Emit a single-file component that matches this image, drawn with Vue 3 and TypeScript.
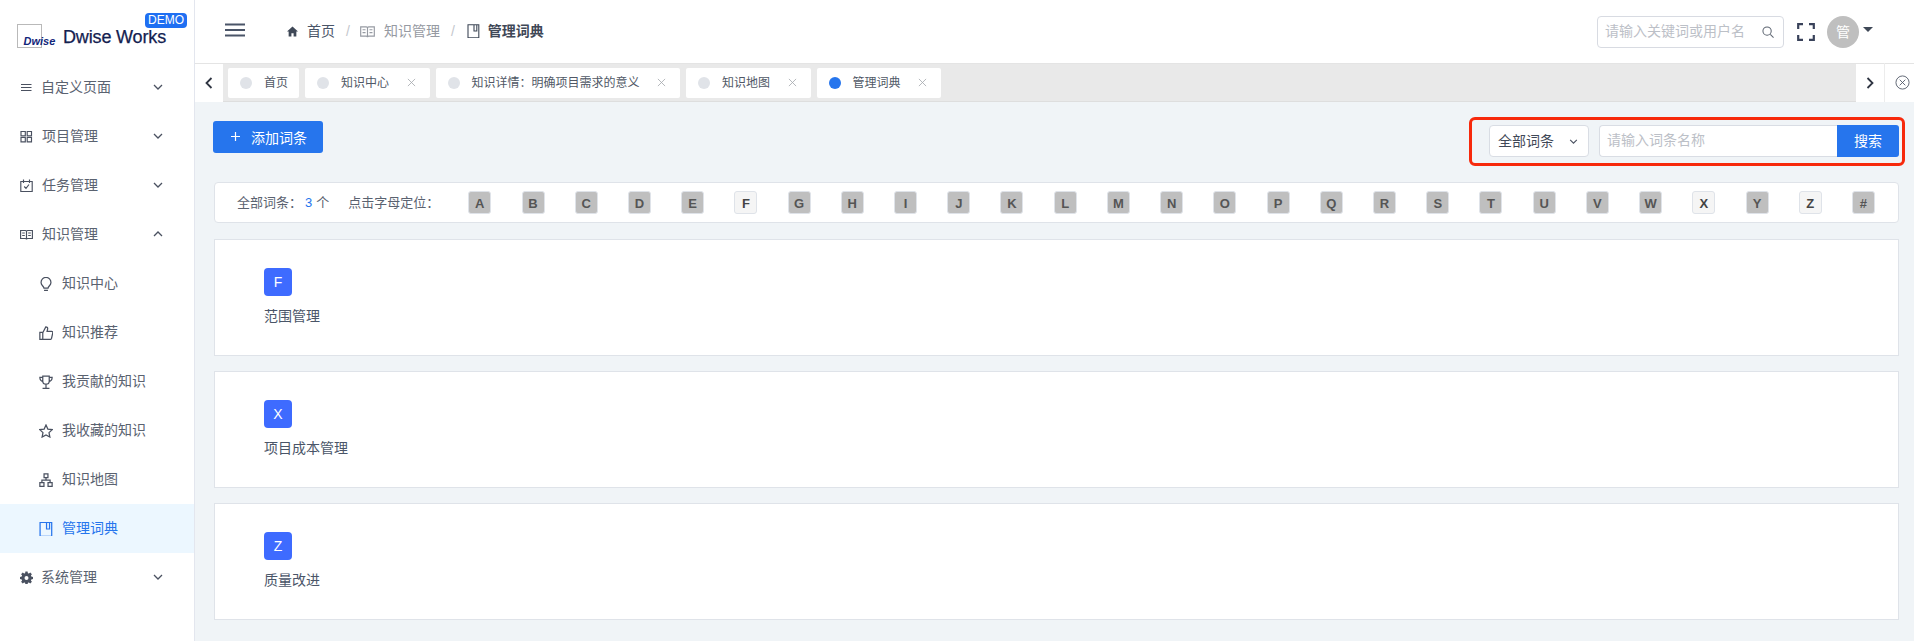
<script setup lang="ts">
interface Item { label: string; icon: string; chev?: 'down' | 'up'; sub?: boolean; active?: boolean; solid?: boolean; tight?: boolean }
const icons: Record<string, string> = {
  list: 'M1 3.500h10.500M1 6.500h10.500M1 9.500h10.500',
  grid: 'M1 1.500h4.300v4.300H1zM7.200 1.500h4.300v4.300H7.200zM1 7.500h4.300v4.300H1zM7.200 7.500h4.300v4.300H7.200z',
  task: 'M.8 2.500h11.400v10H.8zM3.500 .5v3.500M9.500 .5v3.500M4.200 7.500l1.800 1.800 3-3.800',
  book: 'M.6 2.500h4.900c.6 0 1 .4 1 1v8c0-.6-.4-1-1-1H.6zM12.400 2.500H7.500c-.6 0-1 .4-1 1v8c0-.6.4-1 1-1h4.900zM2.200 5h2.600M2.200 7.500h2.600M8.200 5h2.600M8.200 7.500h2.600',
  bulb: 'M4.600 10.300C4.400 8.600 1.900 7.700 1.900 5a4.600 4.600 0 0 1 9.200 0c0 2.700-2.500 3.600-2.700 5.300zM4.700 12.500h3.600',
  thumb: 'M.8 6h2.700v6.500H.8zM3.500 6.200 6.300.8c1.300 0 2 .9 1.700 2L7.500 5h4.200c.8 0 1.300.7 1.100 1.400l-1.200 5.200c-.2.600-.6.900-1.200.9H3.500',
  trophy: 'M3.500 1h6v4.500a3 3 0 0 1-6 0zM3.500 2.200H.8c0 2.400.9 3.600 2.900 4M9.500 2.200h2.700c0 2.400-.9 3.600-2.900 4M6.500 8.500v3.400M3.300 12.400h6.400',
  star: 'm6.500 .9 1.700 3.800 4.100.5-3 2.800.8 4.100-3.600-2-3.600 2 .8-4.100-3-2.800 4.100-.5z',
  map: 'M4.700 .9h3.600v3.400H4.700zM.8 8.900h3.800v3.500H.8zM8.400 8.900h3.800v3.500H8.400zM6.500 4.300v2.400M2.700 8.900V6.700h7.600v2.200',
  doc: 'M1 .3h10.800v13H1zM7 .3v6.200h2.800V.3',
  gear: 'M5.400.5h2.200l.3 1.700 1 .4 1.400-1 1.600 1.600-1 1.400.4 1 1.700.3v2.200l-1.700.3-.4 1 1 1.400-1.600 1.600-1.400-1-1 .4-.3 1.700H5.400l-.3-1.700-1-.4-1.400 1L1.100 10.800l1-1.400-.4-1L0 8.100V5.900l1.700-.3.4-1-1-1.400L2.700 1.600l1.400 1 1-.4zM6.500 5a2 2 0 1 0 0 4 2 2 0 0 0 0-4z',
}
const menu: Item[] = [
  { label: '自定义页面', icon: 'list', chev: 'down', tight: true },
  { label: '项目管理', icon: 'grid', chev: 'down' },
  { label: '任务管理', icon: 'task', chev: 'down' },
  { label: '知识管理', icon: 'book', chev: 'up' },
  { label: '知识中心', icon: 'bulb', sub: true },
  { label: '知识推荐', icon: 'thumb', sub: true },
  { label: '我贡献的知识', icon: 'trophy', sub: true },
  { label: '我收藏的知识', icon: 'star', sub: true },
  { label: '知识地图', icon: 'map', sub: true },
  { label: '管理词典', icon: 'doc', sub: true, active: true },
  { label: '系统管理', icon: 'gear', chev: 'down', solid: true, tight: true },
]
const tabs = [
  { label: '首页', closable: false, on: false },
  { label: '知识中心', closable: true, on: false },
  { label: '知识详情：明确项目需求的意义', closable: true, on: false },
  { label: '知识地图', closable: true, on: false },
  { label: '管理词典', closable: true, on: true },
]
const letters = 'ABCDEFGHIJKLMNOPQRSTUVWXYZ#'.split('')
const hasWords = ['F', 'X', 'Z']
const words = [
  { key: 'F', name: '范围管理' },
  { key: 'X', name: '项目成本管理' },
  { key: 'Z', name: '质量改进' },
]
</script>

<template>
  <div class="app">
    <aside class="side">
      <div class="logo">
        <div class="logo-box"><span class="logo-mark">Dwise</span></div>
        <span class="logo-name">Dwise Works</span>
        <span class="demo">DEMO</span>
      </div>
      <nav>
        <div v-for="m in menu" :key="m.label" class="mi" :class="{ sub: m.sub, active: m.active, tight: m.tight }">
          <svg class="mi-ic" viewBox="0 0 13 13" :class="{ solid: m.solid }"><path :d="icons[m.icon]" /></svg>
          <span class="mi-t">{{ m.label }}</span>
          <svg v-if="m.chev" class="chev" viewBox="0 0 10 6"><path :d="m.chev === 'down' ? 'M1 1l4 4 4-4' : 'M1 5l4-4 4 4'" /></svg>
        </div>
      </nav>
    </aside>

    <div class="main">
      <header class="top">
        <svg class="burger" viewBox="0 0 20 14"><path d="M0 1.500h20M0 7h20M0 12.500h20" /></svg>
        <div class="crumbs">
          <svg class="home" viewBox="0 0 10 10"><path d="M5 .5 0 5h1.500v4.500h2.500V6.500h2v3h2.500V5H10z" /></svg>
          <span class="c-home">首页</span>
          <span class="sep">/</span>
          <svg class="c-ic grey" viewBox="0 0 13 13"><path :d="icons.book" /></svg>
          <span class="c-mid">知识管理</span>
          <span class="sep">/</span>
          <svg class="c-ic doc" viewBox="0 0 13 13"><path :d="icons.doc" /></svg>
          <span class="c-cur">管理词典</span>
        </div>
        <div class="top-right">
          <div class="t-search">
            <span class="ph">请输入关键词或用户名</span>
            <svg class="mag" viewBox="0 0 13 13"><circle cx="5.500" cy="5.500" r="4.500" /><path d="m9 9 3.500 3.500" /></svg>
          </div>
          <svg class="full" viewBox="0 0 18 18"><path d="M1.200 6V1.200H6M12 1.200h4.800V6M16.800 12v4.800H12M6 16.800H1.200V12" /></svg>
          <div class="avatar">管</div>
          <span class="caret"></span>
        </div>
      </header>

      <div class="tabbar">
        <div class="arrow"><svg viewBox="0 0 8 12"><path d="M6.500 1 1.500 6l5 5" /></svg></div>
        <div class="tabs">
          <div v-for="t in tabs" :key="t.label" class="tab" :class="{ fixed: !t.closable }">
            <span class="dot" :class="{ on: t.on }"></span>
            <span class="tab-t">{{ t.label }}</span>
            <svg v-if="t.closable" class="x" viewBox="0 0 10 10"><path d="m1 1 8 8M9 1 1 9" /></svg>
          </div>
        </div>
        <div class="arrow r"><svg viewBox="0 0 8 12"><path d="m1.500 1 5 5-5 5" /></svg></div>
        <div class="closeall"><svg viewBox="0 0 16 16"><circle cx="8" cy="8" r="7" /><path d="m5 5 6 6M11 5l-6 6" /></svg></div>
      </div>

      <main class="content">
        <div class="toolbar">
          <button class="add"><svg viewBox="0 0 9 9"><path d="M4.500 0v9M0 4.500h9" /></svg>添加词条</button>
          <div class="filter">
            <div class="select"><span>全部词条</span><svg viewBox="0 0 10 6"><path d="M1 1l4 4 4-4" /></svg></div>
            <div class="input"><span class="ph">请输入词条名称</span></div>
            <button class="go">搜索</button>
          </div>
        </div>

        <div class="bar">
          <span class="b-l">全部词条：<em>3</em>个</span>
          <span class="b-p">点击字母定位：</span>
          <div class="letters">
            <span v-for="l in letters" :key="l" class="key" :class="{ live: hasWords.includes(l) }">{{ l }}</span>
          </div>
        </div>

        <section v-for="w in words" :key="w.key" class="card">
          <div class="badge">{{ w.key }}</div>
          <div class="word">{{ w.name }}</div>
        </section>
      </main>
    </div>
  </div>
</template>

<style>
html, body { margin: 0; background: #fff; overflow: hidden; }
</style>

<style scoped>
.app {
  display: flex;
  height: 641px;
  overflow: hidden;
  font-family: "Liberation Sans", "Noto Sans CJK SC", sans-serif;
  font-size: 14px;
  color: #4a5568;
}
svg { fill: none; stroke: currentColor; display: block; flex: none; }

.side { width: 194px; flex: none; border-right: 1px solid #e3e6ee; background: #fff; }
.logo { position: relative; height: 63px; }
.logo-box { position: absolute; left: 17px; top: 24px; width: 23px; height: 22px; border: 1.5px solid #b9b9b9; }
.logo-mark { position: absolute; left: 5.500px; top: 9.500px; font-size: 11px; line-height: 13px; font-weight: 700; font-style: italic; color: #12267a; }
.logo-name { position: absolute; left: 63px; top: 26px; font-size: 18px; line-height: 22px; letter-spacing: -.15px; color: #132150; white-space: nowrap; -webkit-text-stroke: .25px #132150; }
.demo { position: absolute; left: 145px; top: 13px; width: 42px; height: 15px; line-height: 15px; text-align: center; font-size: 12px; color: #fff; background: #1f6ff2; border-radius: 4px; }

.mi { height: 49px; box-sizing: border-box; padding-bottom: 2px; display: flex; align-items: center; padding-left: 20px; position: relative; color: #5a6270; }
.mi.sub { padding-left: 39px; }
.mi.active { background: #ecf7ff; color: #2675ed; }
.mi-ic { width: 13px; height: 13px; stroke-width: 1.150; color: #4a5160; margin-top: 2px; }
.mi.sub .mi-ic { width: 14px; height: 14px; }
.mi.active .mi-ic { color: #2675ed; }
.mi-ic.solid { fill: #4a5160; fill-rule: evenodd; stroke: none; }
.mi-t { margin-left: 9px; line-height: 20px; }
.mi.tight .mi-t { margin-left: 8px; }
.mi.sub .mi-t { margin-left: 9px; }
.chev { position: absolute; left: 153px; top: 21px; width: 10px; height: 6px; stroke-width: 1.300; color: #4a5160; }

.main { flex: 1; min-width: 0; display: flex; flex-direction: column; }
.top { height: 63px; flex: none; display: flex; align-items: center; }
.burger { width: 20px; height: 14px; margin-left: 30px; margin-top: -4px; stroke-width: 2; color: #4a5568; }
.crumbs { display: flex; align-items: center; margin-left: 42px; line-height: 20px; margin-top: -1px; }
.home { width: 11px; height: 11px; fill: #3f4857; stroke: none; }
.c-home { margin-left: 9px; color: #4a5568; }
.sep { margin: 0 10px 0 11px; color: #c4c7cd; font-size: 14px; }
.c-ic { width: 15px; height: 15px; stroke-width: 1; }
.c-ic.grey { color: #969aa2; }
.c-ic.doc { color: #3f4857; width: 13px; height: 14px; margin-left: 2px; stroke-width: 1.100; }
.c-mid { margin-left: 9px; color: #969aa2; }
.c-cur { margin-left: 8px; font-weight: 700; color: #3f4857; }
.top-right { margin-left: auto; display: flex; align-items: center; margin-right: 41px; }
.t-search { width: 187px; height: 32px; box-sizing: border-box; border: 1px solid #d8dbe2; border-radius: 4px; display: flex; align-items: center; padding: 0 0 1px 7px; margin-right: 13px; position: relative; }
.ph { color: #bcc0c7; line-height: 20px; white-space: nowrap; }
.mag { position: absolute; right: 9px; top: 9px; width: 12px; height: 12px; stroke-width: 1.100; color: #5c6470; }
.full { width: 18px; height: 18px; stroke-width: 2.200; color: #39425a; margin-right: 12px; }
.avatar { width: 32px; height: 32px; border-radius: 50%; background: #bfbfbf; color: #fff; text-align: center; line-height: 32px; }
.caret { width: 0; height: 0; border: 5px solid transparent; border-top: 5px solid #3f4857; border-bottom: 0; margin-left: 4px; margin-top: -4px; }

.tabbar { height: 39px; flex: none; display: flex; box-sizing: border-box; border-top: 1px solid #e4e4e4; }
.arrow { width: 28px; flex: none; display: flex; align-items: center; justify-content: center; background: #fff; color: #2f3542; }
.arrow svg { width: 8px; height: 12px; stroke-width: 1.800; }
.tabs { flex: 1; min-width: 0; display: flex; align-items: center; gap: 6px; padding-left: 5px; background: #e9e9e9; border-bottom: 1px solid #dedede; }
.tab { height: 30px; background: #fff; border-radius: 2px; display: flex; align-items: center; padding: 0 14px 0 12px; font-size: 12px; color: #505866; box-sizing: border-box; }
.tab.fixed { padding-right: 11px; }
.dot { width: 12px; height: 12px; border-radius: 50%; background: #e0e3e8; margin-right: 12px; }
.dot.on { background: #2675ed; }
.tab-t { line-height: 16px; white-space: nowrap; padding-top: 1px; }
.x { width: 9px; height: 9px; margin-left: 17.500px; color: #a5a8ad; stroke-width: .9; }
.closeall { width: 30px; flex: none; border-left: 1px solid #ececec; display: flex; align-items: center; padding-left: 10px; color: #4a5160; box-sizing: border-box; margin-top: -1px; }
.closeall svg { width: 15px; height: 15px; stroke-width: .9; }

.content { flex: 1; background: #f0f4f7; padding: 19px 15px 0 19px; min-height: 0; }
.toolbar { height: 61px; display: flex; justify-content: space-between; align-items: flex-start; }
button { border: 0; font: inherit; color: #fff; background: #2675ed; cursor: pointer; padding: 0; }
.add { width: 110px; height: 32px; border-radius: 3px; display: flex; align-items: center; padding: 0 0 1px 18px; gap: 11px; box-sizing: border-box; margin-left: -1px; }
.add svg { width: 9px; height: 9px; stroke-width: 1.200; }
.filter { margin: -4px -6px 0 0; box-sizing: border-box; width: 436px; height: 49px; border: 3px solid #f7290c; border-radius: 6px; display: flex; padding: 5px 3px 6px 17px; background: transparent; }
.select { width: 100px; height: 32px; box-sizing: border-box; border: 1px solid #d9dde4; border-radius: 4px; background: #fff; display: flex; align-items: center; padding: 0 0 2px 8px; color: #3f4857; flex: none; }
.select svg { width: 9px; height: 5px; margin: 2px 0 0 15px; stroke-width: 1.300; color: #4a5160; }
.input { flex: 1; height: 32px; box-sizing: border-box; margin-left: 10px; border: 1px solid #d9dde4; border-right: 0; border-radius: 4px 0 0 4px; background: #fff; display: flex; align-items: center; padding: 0 0 2px 7px; }
.go { width: 62px; height: 32px; border-radius: 0 3px 3px 0; flex: none; padding-bottom: 2px; }

.bar { height: 41px; box-sizing: border-box; background: #fff; border: 1px solid #dfe3e9; border-radius: 4px; margin-bottom: 16px; display: flex; align-items: center; padding: 0 23px 0 22px; font-size: 13px; color: #5a6270; }
.b-l em { font-style: normal; color: #2675ed; font-size: 13px; margin: 0 4px 0 3px; }
.b-l, .b-p { line-height: 18px; white-space: nowrap; }
.b-p { margin-left: 19px; }
.letters { flex: 1; display: flex; justify-content: space-between; margin-left: 29px; }
.key { width: 23px; height: 23px; box-sizing: border-box; border: 1px solid #dfe3e9; border-radius: 3px; background: #bfbfbf; color: #555; font-size: 13px; font-weight: 700; text-align: center; line-height: 24px; }
.key.live { background: #f5f5f5; color: #444; }

.card { height: 117px; box-sizing: border-box; margin-bottom: 15px; background: #fff; border: 1px solid #dfe3e9; padding: 28px 0 0 49px; }
.badge { width: 28px; height: 28px; border-radius: 4px; background: #3e6bff; color: #fff; text-align: center; line-height: 28px; font-size: 14px; }
.word { margin-top: 10px; line-height: 20px; color: #4a5568; }
</style>
